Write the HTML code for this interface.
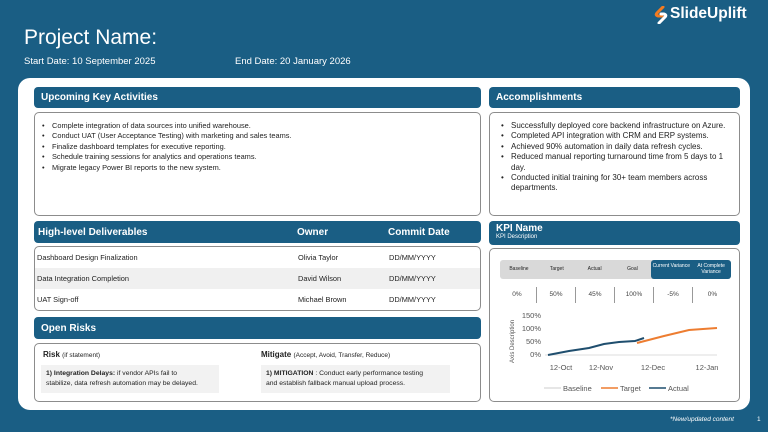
<!DOCTYPE html>
<html><head><meta charset="utf-8"><style>
*{margin:0;padding:0;box-sizing:border-box}
body{width:768px;height:432px;background:#1a5e84;font-family:"Liberation Sans",sans-serif;position:relative;overflow:hidden;color:#222}
.abs{position:absolute}
.hdr{position:absolute;background:#1a5e84;color:#fff;border-radius:4px;font-weight:bold;font-size:10px;padding-left:7px;display:flex;align-items:center}
.box{position:absolute;border:1px solid #8c8c8c;border-radius:5px;background:#fff}
ul{list-style:none;font-size:7.4px;line-height:10.4px}
li{position:relative;padding-left:13px}
li:before{content:"•";position:absolute;left:3px}
.row{position:absolute;left:0;right:0;height:21px;font-size:7.4px;display:flex;align-items:center}
.row span{position:absolute}
</style></head><body>
<div class="abs" style="left:24px;top:26px;color:#fff;font-size:21px">Project Name:</div>
<div class="abs" style="left:24px;top:56px;color:#fff;font-size:9.5px">Start Date: 10 September 2025</div>
<div class="abs" style="left:235px;top:56px;color:#fff;font-size:9.5px">End Date: 20 January 2026</div>
<svg class="abs" style="left:654px;top:6px" width="14" height="18" viewBox="0 0 14 18"><path d="M9 1 L3 7 Q1 9 4 10 L8 10" stroke="#f37b21" stroke-width="3" fill="none" stroke-linecap="round"/><path d="M5 17 L11 11 Q13 9 10 8 L7 8" stroke="#fff" stroke-width="3" fill="none" stroke-linecap="round"/></svg>
<div class="abs" style="left:670px;top:5px;color:#fff;font-size:15.5px;font-weight:bold">SlideUplift</div>

<div class="abs" style="left:18px;top:78px;width:732px;height:332px;background:#fff;border-radius:12px"></div>

<div class="hdr" style="left:34px;top:87px;width:447px;height:21px">Upcoming Key Activities</div>
<div class="box" style="left:34px;top:112px;width:447px;height:104px;padding:8px 4px">
<ul><li>Complete integration of data sources into unified warehouse.</li><li>Conduct UAT (User Acceptance Testing) with marketing and sales teams.</li><li>Finalize dashboard templates for executive reporting.</li><li>Schedule training sessions for analytics and operations teams.</li><li>Migrate legacy Power BI reports to the new system.</li></ul></div>

<div class="hdr" style="left:489px;top:87px;width:251px;height:21px">Accomplishments</div>
<div class="box" style="left:489px;top:112px;width:251px;height:104px;padding:8px 12px 8px 8px">
<ul style="font-size:8px"><li>Successfully deployed core backend infrastructure on Azure.</li><li>Completed API integration with CRM and ERP systems.</li><li>Achieved 90% automation in daily data refresh cycles.</li><li>Reduced manual reporting turnaround time from 5 days to 1 day.</li><li>Conducted initial training for 30+ team members across departments.</li></ul></div>

<div class="hdr" style="left:34px;top:221px;width:447px;height:22px;padding-left:4px">High-level Deliverables<span class="abs" style="left:263px">Owner</span><span class="abs" style="left:354px">Commit Date</span></div>
<div class="box" style="left:34px;top:246px;width:447px;height:65px;overflow:hidden">
<div class="row" style="top:0"><span style="left:2px">Dashboard Design Finalization</span><span style="left:263px">Olivia Taylor</span><span style="left:354px">DD/MM/YYYY</span></div>
<div class="row" style="top:21px;background:#f0f0f0"><span style="left:2px">Data Integration Completion</span><span style="left:263px">David Wilson</span><span style="left:354px">DD/MM/YYYY</span></div>
<div class="row" style="top:42px"><span style="left:2px">UAT Sign-off</span><span style="left:263px">Michael Brown</span><span style="left:354px">DD/MM/YYYY</span></div>
</div>

<div class="hdr" style="left:34px;top:317px;width:447px;height:22px">Open Risks</div>
<div class="box" style="left:34px;top:343px;width:447px;height:59px">
<div class="abs" style="left:8px;top:6px;font-size:8px;font-weight:bold">Risk <span style="font-weight:normal;font-size:6.5px">(if statement)</span></div>
<div class="abs" style="left:6px;top:21px;width:178px;height:28px;background:#f2f2f2;font-size:6.8px;line-height:9.5px;padding:4px 5px;white-space:nowrap"><b>1) Integration Delays:</b> if vendor APIs fail to<br>stabilize, data refresh automation may be delayed.</div>
<div class="abs" style="left:226px;top:6px;font-size:8px;font-weight:bold">Mitigate <span style="font-weight:normal;font-size:6.5px">(Accept, Avoid, Transfer, Reduce)</span></div>
<div class="abs" style="left:226px;top:21px;width:189px;height:28px;background:#f2f2f2;font-size:6.8px;line-height:9.5px;padding:4px 5px;white-space:nowrap"><b>1) MITIGATION</b> : Conduct early performance testing<br>and establish fallback manual upload process.</div>
</div>

<div class="hdr" style="left:489px;top:221px;width:251px;height:24px;display:block;padding-top:2px">KPI Name<div style="font-size:6px;font-weight:normal;margin-top:0px">KPI Description</div></div>
<div class="box" style="left:489px;top:248px;width:251px;height:154px">
<div class="abs" style="left:10px;top:11px;width:231px;height:19px;background:#d9d9d9;border-radius:3px"></div>
<div class="abs" style="left:161px;top:11px;width:80px;height:19px;background:#1a5e84;border-radius:3px"></div>
<div class="abs" style="top:17px;left:10px;width:231px;font-size:5px;display:flex;text-align:center">
<div style="width:38px">Baseline</div><div style="width:38px">Target</div><div style="width:38px">Actual</div><div style="width:38px">Goal</div><div style="width:40px;color:#fff;margin-top:-3px">Current Variance</div><div style="width:40px;color:#fff;margin-top:-3px">At Complete Variance</div></div>
<div class="abs" style="top:38px;left:8px;width:235px;font-size:6.5px;display:flex;text-align:center;color:#444">
<div style="width:39px;border-right:1px solid #999;height:16px;line-height:16px">0%</div><div style="width:39px;border-right:1px solid #999;line-height:16px">50%</div><div style="width:39px;border-right:1px solid #999;line-height:16px">45%</div><div style="width:39px;border-right:1px solid #999;line-height:16px">100%</div><div style="width:39px;border-right:1px solid #999;line-height:16px">-5%</div><div style="width:39px;line-height:16px">0%</div></div>
</div>
<svg class="abs" style="left:489px;top:300px" width="251" height="100" font-family="Liberation Sans" font-size="7.5" fill="#555">
<text x="52" y="18" text-anchor="end">150%</text><text x="52" y="31" text-anchor="end">100%</text><text x="52" y="44" text-anchor="end">50%</text><text x="52" y="57" text-anchor="end">0%</text>
<text transform="translate(25,63) rotate(-90)" font-size="6">Axis Description</text>
<line x1="56" y1="55" x2="228" y2="55" stroke="#ddd"/>
<polyline points="148,43 175,36 200,30 228,28" stroke="#ed7d31" stroke-width="2" fill="none"/>
<polyline points="59,55 80,51 100,48 115,44 130,42 146,41 155,38" stroke="#1f4e6e" stroke-width="2" fill="none"/>
<text x="72" y="70" text-anchor="middle">12-Oct</text><text x="112" y="70" text-anchor="middle">12-Nov</text><text x="164" y="70" text-anchor="middle">12-Dec</text><text x="218" y="70" text-anchor="middle">12-Jan</text>
<line x1="55" y1="88" x2="72" y2="88" stroke="#ddd" stroke-width="1.6"/><text x="74" y="91">Baseline</text>
<line x1="112" y1="88" x2="129" y2="88" stroke="#ed7d31" stroke-width="1.6"/><text x="131" y="91">Target</text>
<line x1="160" y1="88" x2="177" y2="88" stroke="#1f4e6e" stroke-width="1.6"/><text x="179" y="91">Actual</text>
</svg>

<div class="abs" style="left:670px;top:416px;color:#fff;font-size:6.5px;font-style:italic">*New/updated content</div>
<div class="abs" style="left:757px;top:416px;color:#fff;font-size:6.5px">1</div>
</body></html>
